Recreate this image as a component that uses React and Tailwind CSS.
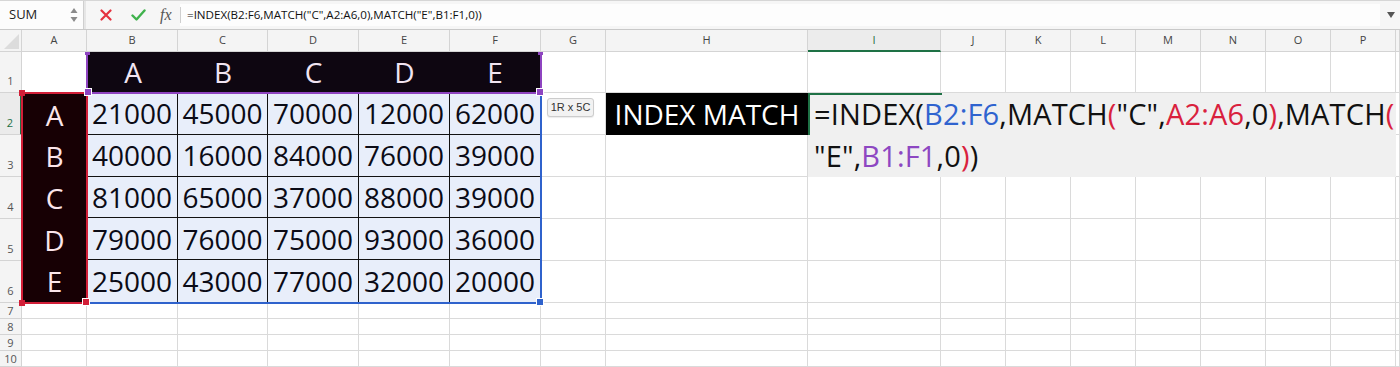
import React from "react";

const COLS = ["A","B","C","D","E","F","G","H","I","J","K","L","M","N","O","P",""];
const DATA = [
  [21000, 45000, 70000, 12000, 62000],
  [40000, 16000, 84000, 76000, 39000],
  [81000, 65000, 37000, 88000, 39000],
  [79000, 76000, 75000, 93000, 36000],
  [25000, 43000, 77000, 32000, 20000],
];
const LETTERS = ["A","B","C","D","E"];

const RED = "#d21f38";
const PURPLE = "#8e44c0";
const BLUE = "#2f62cc";
const GREEN = "#1e7145";

function Toolbar() {
  return (
    <div className="h-[30px] flex items-stretch bg-[#f6f6f6] border-t border-t-[#d6d6d6] border-b border-b-[#c9c9c9]">
      <div className="w-[84px] flex items-center justify-between pl-[9px] pr-[5px] bg-[#fcfcfc] border-r border-[#cfcfcf]">
        <span className="text-[13px] text-[#222]">SUM</span>
        <svg width="8" height="16" viewBox="0 0 8 16">
          <path d="M4 1 L7.5 6 L0.5 6 Z" fill="#8a8a8a" />
          <path d="M4 15 L7.5 10 L0.5 10 Z" fill="#8a8a8a" />
        </svg>
      </div>
      <div className="w-[2px] bg-[#e6e6e6]" />
      <div className="flex items-center w-[94px] pl-[14px]">
        <svg width="12" height="12" viewBox="0 0 12 12">
          <path d="M1.5 1.5 L10.5 10.5 M10.5 1.5 L1.5 10.5" stroke="#e5323f" strokeWidth="2.2" strokeLinecap="round" />
        </svg>
        <svg className="ml-[19px]" width="15" height="12" viewBox="0 0 15 12">
          <path d="M1.5 6.5 L5.5 10.5 L13.5 1.5" stroke="#3fb24c" strokeWidth="2.4" fill="none" strokeLinecap="round" strokeLinejoin="round" />
        </svg>
        <span className="ml-[14px] text-[16px] italic text-[#555] font-['Liberation_Serif',serif] leading-none">fx</span>
      </div>
      <div className="flex-1 flex items-center bg-[#fdfdfd] my-[3px] mr-[2px]">
        <div className="w-px h-[16px] bg-[#cfcfcf] mr-[6px]" />
        <span className="text-[11.6px] text-[#111] font-['Open_Sans',sans-serif]">
          =INDEX(B2:F6,MATCH("C",A2:A6,0),MATCH("E",B1:F1,0))
        </span>
      </div>
      <div className="w-[18px] flex items-center justify-center">
        <svg width="8" height="6" viewBox="0 0 8 6">
          <path d="M0 0 L8 0 L4 6 Z" fill="#555" />
        </svg>
      </div>
    </div>
  );
}

function ColHeader({ ci, label }) {
  if (ci === 8) {
    return (
      <div className="flex items-center justify-center bg-[#ececec] border-r border-[#d4d4d4] border-b-2 border-b-[#1e7145] text-[11px] text-[#1e6b40]">
        {label}
      </div>
    );
  }
  return (
    <div className="flex items-center justify-center bg-[#f4f4f4] border-r border-b border-[#d4d4d4] text-[11px] text-[#444]">
      {label}
    </div>
  );
}

function RowHeader({ r }) {
  if (r === 2) {
    return (
      <div className="flex items-end justify-center pb-[4px] bg-[#ebebeb] border-b border-[#d4d4d4] border-r-2 border-r-[#1e7145] text-[11px] leading-[14px] text-[#1e7145]">
        {r}
      </div>
    );
  }
  if (r <= 6) {
    return (
      <div className="flex items-end justify-center pb-[4px] bg-[#f4f4f4] border-r border-b border-[#d4d4d4] text-[11px] leading-[14px] text-[#555]">
        {r}
      </div>
    );
  }
  return (
    <div className="flex items-end justify-center bg-[#f4f4f4] border-r border-b border-[#d4d4d4] text-[11px] leading-[15px] text-[#555]">
      {r}
    </div>
  );
}

function Blank() {
  return <div className="bg-white border-r border-b border-[#dadada]" />;
}

function Handle({ className }) {
  return <div className={className} />;
}

/* B2:F6 values block */
function ValuesBlock() {
  return (
    <div className="col-[3/8] row-[3/8] relative mr-[-1px] mb-[-1px] bg-[#e8eefa] border-r-2 border-b-2 border-[#2f62cc] grid grid-cols-[91px_90px_91px_91px_1fr] grid-rows-5">
      {DATA.map((row, ri) =>
        row.map((v, ci) => (
          <div
            key={`${ri}-${ci}`}
            className={
              ri < 4
                ? ci < 4
                  ? "flex items-center justify-center border-r border-b border-[#111] text-[28px] leading-none text-[#0b0b16]"
                  : "flex items-center justify-center border-b border-[#111] text-[28px] leading-none text-[#0b0b16]"
                : ci < 4
                ? "flex items-center justify-center border-r border-[#111] text-[28px] leading-none text-[#0b0b16]"
                : "flex items-center justify-center text-[28px] leading-none text-[#0b0b16]"
            }
          >
            {v}
          </div>
        ))
      )}
      <Handle className="absolute -right-[4px] -bottom-[4px] w-[8px] h-[8px] bg-[#2f62cc] border border-white" />
    </div>
  );
}

/* A2:A6 letters block */
function RowLabelsBlock() {
  return (
    <div className="col-[2/3] row-[3/8] relative ml-[-1px] mr-[-1px] mt-[-1px] mb-[-1px] bg-[#170004] border-2 border-[#d21f38] flex flex-col">
      {LETTERS.map((l) => (
        <div key={l} className="flex-1 flex items-center justify-center text-[28px] leading-none text-[#fbe5ea]">
          {l}
        </div>
      ))}
      <Handle className="absolute -left-[4px] -top-[4px] w-[6px] h-[6px] bg-[#d21f38]" />
      <Handle className="absolute -left-[4px] -bottom-[4px] w-[6px] h-[6px] bg-[#d21f38]" />
      <Handle className="absolute -right-[4px] -bottom-[4px] w-[8px] h-[8px] bg-[#d21f38] border border-white" />
    </div>
  );
}

/* B1:F1 letters block */
function ColLabelsBlock() {
  return (
    <div className="col-[3/8] row-[2/3] relative ml-[-1px] mr-[-1px] mb-[-1px] bg-[#0e0611] border-l-2 border-r-2 border-b-2 border-[#8e44c0] grid grid-cols-[90px_90px_91px_91px_1fr]">
      {LETTERS.map((l) => (
        <div key={l} className="flex items-center justify-center text-[28px] leading-none text-[#f1e4f1]">
          {l}
        </div>
      ))}
      <Handle className="absolute -left-[3px] top-0 w-[5px] h-[3px] bg-[#8e44c0]" />
      <Handle className="absolute -right-[3px] top-0 w-[5px] h-[3px] bg-[#8e44c0]" />
      <Handle className="absolute -left-[4px] -bottom-[4px] w-[8px] h-[8px] bg-[#8e44c0] border border-white" />
      <Handle className="absolute -right-[4px] -bottom-[4px] w-[8px] h-[8px] bg-[#8e44c0] border border-white" />
    </div>
  );
}

function FormulaBox() {
  return (
    <div className="col-[10/18] row-[3/5] relative bg-[#f0f0f0] pl-[6px] text-[29px] leading-[42px] tracking-[0.15px] text-[#111] whitespace-nowrap overflow-hidden">
      <div>
        =INDEX(<span className="text-[#2f63cf]">B2:F6</span>,MATCH<span className="text-[#d9213d]">(</span>"C",<span className="text-[#d9213d]">A2:A6</span>,0<span className="text-[#d9213d]">)</span>,MATCH<span className="text-[#d9213d]">(</span>
      </div>
      <div>
        "E",<span className="text-[#8d47c2]">B1:F1</span>,0<span className="text-[#d9213d]">)</span>)
      </div>
      <div className="absolute left-0 top-0 w-[134px] h-[2px] bg-[#1e7145]" />
      <div className="absolute left-0 top-0 w-[2px] h-[42px] bg-[#1e7145]" />
    </div>
  );
}

export default function App() {
  const rest = COLS.slice(8); // I..P + extra
  return (
    <div className="w-[1400px] h-[367px] overflow-hidden bg-white font-['Open_Sans',sans-serif]">
      <Toolbar />
      <div className="grid grid-cols-[22px_65px_91px_90px_91px_91px_91px_65px_202px_133px_65px_65px_65px_65px_65px_65px_65px_1fr] grid-rows-[22px_41px_42px_42px_42px_42px_42px_16px_16px_16px_16px]">
        {/* header row */}
        <div className="bg-[#f4f4f4] border-r border-b border-[#d4d4d4] flex items-end justify-end p-[2px]">
          <svg width="15" height="15" viewBox="0 0 15 15">
            <path d="M15 0 L15 15 L0 15 Z" fill="#dcdcdc" />
          </svg>
        </div>
        {COLS.map((c, ci) => (
          <ColHeader key={`ch-${ci}`} ci={ci} label={c} />
        ))}

        {/* explicitly placed blocks */}
        <ValuesBlock />
        <RowLabelsBlock />
        <ColLabelsBlock />
        <FormulaBox />

        {/* row 1 */}
        <RowHeader r={1} />
        <Blank />
        {COLS.slice(6).map((_, i) => <Blank key={`r1-${i}`} />)}

        {/* row 2 */}
        <RowHeader r={2} />
        <div className="bg-white border-r border-b border-[#dadada] pl-[6px] pt-[5px]">
          <div className="w-[47px] h-[19px] bg-[#f2f2f2] border border-[#cccccc] rounded-[3px] shadow-[0_1px_1px_rgba(0,0,0,0.08)] flex items-center justify-center text-[11px] text-[#333] font-['Liberation_Sans',sans-serif]">
            1R x 5C
          </div>
        </div>
        <div className="bg-black flex items-center justify-center text-[28px] text-white leading-none">
          INDEX MATCH
        </div>
        <Blank />

        {/* row 3 */}
        <RowHeader r={3} />
        <Blank />
        <Blank />
        <Blank />

        {/* rows 4-6 */}
        {[4, 5, 6].map((r) => (
          <React.Fragment key={`r-${r}`}>
            <RowHeader r={r} />
            <Blank />
            <Blank />
            {rest.map((_, i) => <Blank key={`r${r}-${i}`} />)}
          </React.Fragment>
        ))}

        {/* rows 7-10 */}
        {[7, 8, 9, 10].map((r) => (
          <React.Fragment key={`r-${r}`}>
            <RowHeader r={r} />
            {COLS.map((_, i) => <Blank key={`r${r}-${i}`} />)}
          </React.Fragment>
        ))}
      </div>
    </div>
  );
}
